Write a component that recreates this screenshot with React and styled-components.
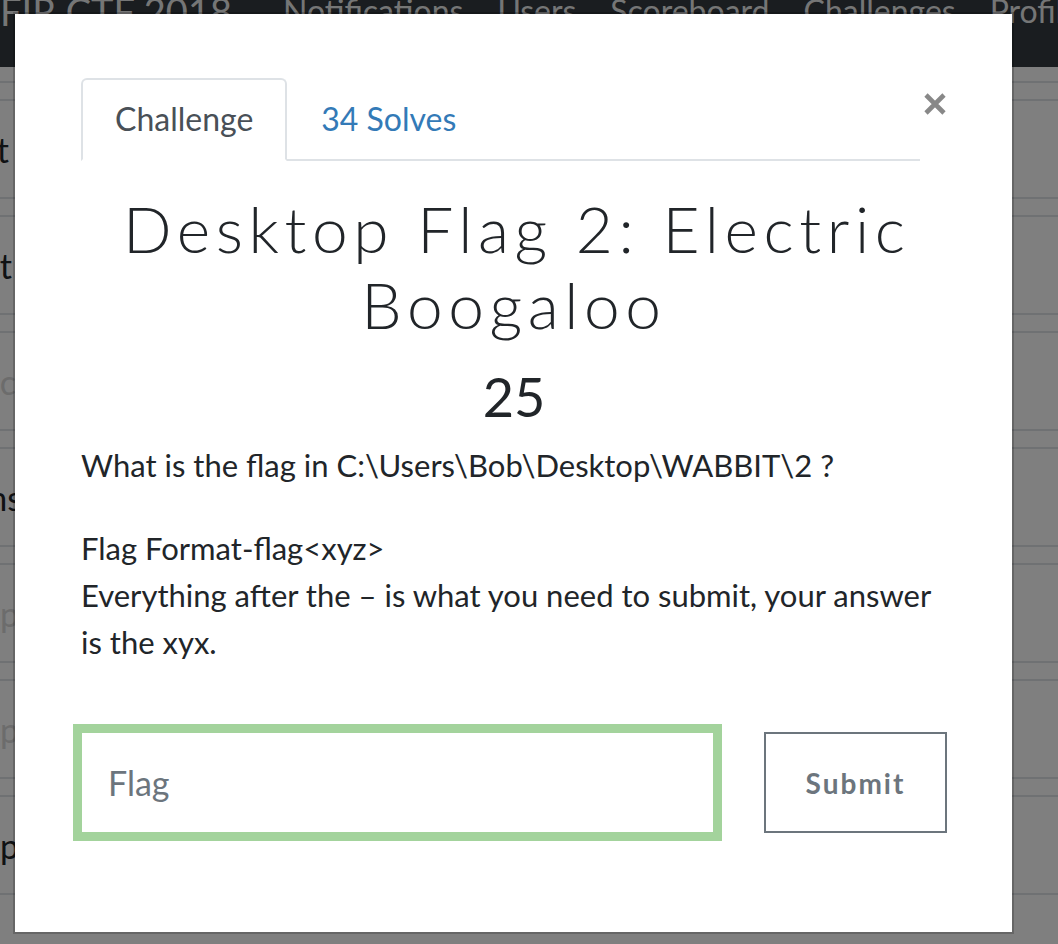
import React from 'react';
import styled, { createGlobalStyle } from 'styled-components';

const Global = createGlobalStyle`
  html, body { margin: 0; padding: 0; background: #fff; overflow: hidden; }
  body { font-family: Lato, "Noto Sans", sans-serif; }
  * { box-sizing: border-box; }
`;

const Page = styled.div`
  width: 1058px;
  height: 944px;
  overflow: hidden;
  background: #fff;
`;

const Navbar = styled.nav`
  height: 67px;
  background: #343a40;
  display: flex;
  align-items: flex-start;
  font-size: 32px;
  line-height: 22px;
  color: rgba(255, 255, 255, 0.92);
  white-space: nowrap;
`;

const Brand = styled.span`
  font-size: 38px;
  margin-right: 34px;
`;

const NavLink = styled.span`
  padding: 0 17px;
`;

const List = styled.div`
  display: flex;
  flex-direction: column;
  gap: 16px;
`;

const Row = styled.div`
  height: ${p => (p.$cut ? '16px' : '100px')};
  border-top: ${p => (p.$cut ? 'none' : '2px solid #dee2e6')};
  border-bottom: 2px solid #dee2e6;
  display: flex;
  align-items: center;
`;

const RowName = styled.div`
  width: ${p => p.$end}px;
  display: flex;
  justify-content: flex-end;
  white-space: nowrap;
  font-size: 34px;
  color: ${p => (p.$muted ? '#d8d8d8' : '#212529')};
`;

const Backdrop = styled.div`
  position: fixed;
  inset: 0;
  background: rgba(0, 0, 0, 0.5);
  padding: 12px 0 0 13px;
`;

const Dialog = styled.div`
  width: 1001px;
  background: #fff;
  background-clip: padding-box;
  border: 2px solid rgba(0, 0, 0, 0.2);
  padding: 64px 65px 99px 66px;
`;

const Header = styled.div`
  display: flex;
  align-items: flex-start;
  gap: 3px;
`;

const Tabs = styled.div`
  flex: 1;
  display: flex;
  border-bottom: 2px solid #dee2e6;
`;

const Tab = styled.div`
  font-size: 32px;
  line-height: 44px;
  padding: 17px 32px 18px;
  margin-bottom: -2px;
  border: 2px solid transparent;
  border-radius: 6px 6px 0 0;
  color: ${p => (p.$active ? '#495057' : '#337ab7')};
  ${p => p.$active && 'border-color: #dee2e6 #dee2e6 #fff; background: #fff;'}
`;

const Close = styled.button`
  margin-top: 15px;
  width: 24px;
  height: 22px;
  padding: 0;
  border: 0;
  background: none;
  display: flex;
`;

const Title = styled.h2`
  margin: 30px 0 0;
  text-align: center;
  font-weight: 300;
  font-size: 64px;
  line-height: 76px;
  letter-spacing: 5.6px;
  text-indent: 5.6px;
  color: #212529;
`;

const Points = styled.h4`
  margin: 21px 0 0;
  text-align: center;
  font-weight: 400;
  font-size: 54px;
  line-height: 65px;
  color: #212529;
`;

const Text = styled.p`
  margin: ${p => (p.$first ? '13px' : '36px')} 0 0;
  font-size: 31px;
  line-height: 47px;
  color: #212529;
`;

const Form = styled.div`
  margin-top: 66px;
  display: flex;
  align-items: center;
  gap: 50px;
`;

const FlagInput = styled.input`
  width: 633px;
  height: 101px;
  border: 1px solid #a3d39c;
  box-shadow: 0 0 0 8px #a3d39c;
  outline: none;
  padding: 0 26px;
  font-family: Lato, sans-serif;
  font-size: 34px;
  color: #495057;
  &::placeholder { color: #6c757d; }
`;

const Submit = styled.button`
  width: 183px;
  height: 101px;
  border: 2px solid #6c757d;
  background: #fff;
  font-family: Lato, sans-serif;
  font-weight: 700;
  font-size: 28px;
  letter-spacing: 2px;
  color: #6c757d;
`;

const rows = [
  { name: 'Desktop Flag 1: First Sight', muted: false, end: 9 },
  { name: 'Desktop Flag 3: Shortcut', muted: false, end: 12 },
  { name: 'Wireshark Magic', muted: true, end: 16 },
  { name: 'Malware Beacons', muted: false, end: 22 },
  { name: 'Memory Dump', muted: true, end: 19 },
  { name: 'Disk Image Cleanup', muted: true, end: 19 },
  { name: 'Network Setup', muted: false, end: 19 },
];

export default function App() {
  return (
    <Page>
      <Global />
      <Navbar>
        <Brand>FIR CTF 2018</Brand>
        <NavLink>Notifications</NavLink>
        <NavLink>Users</NavLink>
        <NavLink>Scoreboard</NavLink>
        <NavLink>Challenges</NavLink>
        <NavLink>Profile</NavLink>
      </Navbar>
      <List>
        <Row $cut />
        {rows.map(r => (
          <Row key={r.name}>
            <RowName $muted={r.muted} $end={r.end}>{r.name}</RowName>
          </Row>
        ))}
      </List>
      <Backdrop>
        <Dialog>
          <Header>
            <Tabs>
              <Tab $active>Challenge</Tab>
              <Tab>34 Solves</Tab>
            </Tabs>
            <Close aria-label="Close">
              <svg width="24" height="22" viewBox="0 0 24 22">
                <path d="M3 2 L21 20 M21 2 L3 20" stroke="#888" strokeWidth="4.6" strokeLinecap="butt" />
              </svg>
            </Close>
          </Header>
          <Title>Desktop Flag 2: Electric Boogaloo</Title>
          <Points>25</Points>
          <Text $first>What is the flag in C:\Users\Bob\Desktop\WABBIT\2 ?</Text>
          <Text>
            Flag Format-flag&lt;xyz&gt;
            <br />
            Everything after the – is what you need to submit, your answer is the xyx.
          </Text>
          <Form>
            <FlagInput placeholder="Flag" />
            <Submit>Submit</Submit>
          </Form>
        </Dialog>
      </Backdrop>
    </Page>
  );
}
